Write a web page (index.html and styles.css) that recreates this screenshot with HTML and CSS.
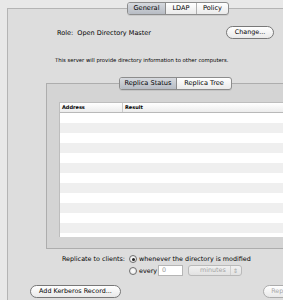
FILE: index.html
```html
<!DOCTYPE html>
<html lang="en">
<head>
  <meta charset="UTF-8" />
  <title>Open Directory</title>
  <link rel="stylesheet" href="styles.css">
</head>
<body>

<div class="pane">
  <div class="tabs top-tabs">
    <span class="tab on w-general">General</span><span class="tab w-ldap">LDAP</span><span class="tab w-policy">Policy</span>
  </div>

  <div class="role-row">
    <span>Role:&nbsp; Open Directory Master</span>
    <button class="btn change">Change...</button>
  </div>

  <p class="desc">This server will provide directory information to other computers.</p>

  <div class="subpane">
    <div class="tabs sub-tabs">
      <span class="tab on w-status">Replica Status</span><span class="tab w-tree">Replica Tree</span>
    </div>

    <div class="table">
      <div class="thead">
        <span class="col-addr">Address</span><span class="col-res">Result</span>
      </div>
      <div class="row"></div>
      <div class="row"></div>
      <div class="row"></div>
      <div class="row"></div>
      <div class="row"></div>
      <div class="row"></div>
      <div class="row"></div>
      <div class="row"></div>
      <div class="row"></div>
      <div class="row"></div>
      <div class="row"></div>
      <div class="row"></div>
      <div class="row"></div>
    </div>
  </div>

  <div class="replicate">
    <div class="rep-row">
      <span class="rep-label">Replicate to clients:</span>
      <span class="radio on"></span>
      <span>whenever the directory is modified</span>
    </div>
    <div class="rep-row second">
      <span class="rep-label"></span>
      <span class="radio"></span>
      <span class="every">every</span>
      <span class="num">0</span>
      <span class="select">minutes<span class="arrows">&#8661;</span></span>
    </div>
  </div>

  <div class="bottom-row">
    <button class="btn kerberos">Add Kerberos Record...</button>
    <button class="btn repl" disabled>Replicate...</button>
  </div>
</div>

</body>
</html>
```

FILE: styles.css
```css
html, body {
  margin: 0;
  padding: 0;
  overflow: hidden;
}
body {
  width: 283px;
  height: 300px;
  background: #e8e8e8;
  font-family: "DejaVu Sans", "Liberation Sans", sans-serif;
  font-size: 6.4px;
  color: #000;
  padding-top: 8px;
  box-sizing: border-box;
}
.pane {
  margin-left: 7px;
  width: 320px;
  height: 320px;
  background: #dddddd;
  border: 1px solid #b4b4b4;
  border-right: none;
}

/* segmented tabs */
.tabs {
  display: flex;
  width: max-content;
  height: 13px;
  box-sizing: border-box;
  border: 1px solid #8c8c8c;
  border-radius: 3px;
  overflow: hidden;
  background: linear-gradient(#ffffff, #eaeaea);
  box-shadow: 0 1px 0 rgba(0,0,0,0.08);
}
.tab {
  display: block;
  text-align: center;
  line-height: 11px;
  font-size: 6.6px;
  border-left: 1px solid #b0b0b0;
}
.tab:first-child {
  border-left: none;
}
.tab.on {
  background: linear-gradient(#d6d9de, #b7bcc4);
  border-left-color: #8c8c8c;
}
.tab.on + .tab {
  border-left-color: #8c8c8c;
}
.top-tabs {
  margin: -7px 0 0 119px;
}
.w-general { width: 37px; }
.w-ldap { width: 30px; }
.w-policy { width: 31px; }
.sub-tabs {
  margin: -7px 0 0 72px;
}
.w-status { width: 56px; }
.w-tree { width: 54px; }

/* buttons */
.btn {
  display: block;
  height: 13px;
  padding: 0;
  box-sizing: border-box;
  border: 1px solid #787878;
  border-radius: 7px;
  background: linear-gradient(#ffffff, #e9e9e9);
  font-family: inherit;
  font-size: 6.4px;
  color: #000;
  line-height: 11px;
  text-align: center;
}
.btn:disabled {
  color: #a8a8a8;
  border-color: #acacac;
}

.role-row {
  display: flex;
  align-items: center;
  justify-content: space-between;
  width: 266px;
  height: 13px;
  margin-top: 11px;
  padding-left: 49px;
  box-sizing: border-box;
  font-size: 6.5px;
}
.change {
  width: 48px;
}

.desc {
  margin: 17px 0 0 47px;
  font-size: 5.3px;
  line-height: 8px;
}

.subpane {
  margin: 19px 0 0 38px;
  background: #d4d4d4;
  border: 1px solid #adadad;
  border-right: none;
  padding-bottom: 11px;
}
.table {
  margin: 12px 0 0 12px;
  height: 135px;
  overflow: hidden;
  background: #fff;
  border-left: 1px solid #bdbdbd;
  border-top: 1px solid #bdbdbd;
  box-sizing: border-box;
}
.thead {
  display: flex;
  height: 9px;
  border-bottom: 1px solid #b9b9b9;
  background: linear-gradient(#ffffff, #ececec);
  font-size: 5px;
  font-weight: bold;
  line-height: 8px;
}
.col-addr {
  width: 63px;
  padding-left: 2px;
  border-right: 1px solid #cacaca;
  box-sizing: border-box;
}
.col-res {
  padding-left: 2px;
}
.row {
  height: 10px;
}
.row:nth-child(odd) {
  background: #efefef;
}

.replicate {
  margin-top: 5px;
}
.rep-row {
  display: flex;
  align-items: center;
  height: 10px;
}
.rep-row.second {
  height: 11px;
  margin-top: 1px;
}
.rep-label {
  width: 117px;
  text-align: right;
  margin-right: 4px;
}
.radio {
  width: 8px;
  height: 8px;
  box-sizing: border-box;
  border: 1px solid #6f6f6f;
  border-radius: 50%;
  background: radial-gradient(#ffffff, #e2e2e2);
  margin-right: 2px;
  position: relative;
}
.radio.on::after {
  content: "";
  position: absolute;
  left: 1.5px;
  top: 1.5px;
  width: 3px;
  height: 3px;
  border-radius: 50%;
  background: #222;
}
.every {
  width: 19px;
}
.num {
  width: 25px;
  height: 11px;
  box-sizing: border-box;
  background: #fff;
  border: 1px solid #b5b5b5;
  color: #999;
  padding-left: 3px;
  line-height: 9px;
}
.select {
  display: flex;
  justify-content: space-between;
  width: 54px;
  height: 11px;
  margin-left: 5px;
  box-sizing: border-box;
  border: 1px solid #b9b9b9;
  border-radius: 3px;
  background: linear-gradient(#f1f1f1, #e2e2e2);
  color: #a4a4a4;
  padding: 0 3px 0 11px;
  line-height: 9px;
}
.arrows {
  font-size: 6px;
  border-left: 1px solid #cfcfcf;
  padding-left: 2px;
}

.bottom-row {
  display: flex;
  margin-top: 9px;
  padding-left: 22px;
}
.kerberos {
  width: 91px;
}
.repl {
  width: 52px;
  margin-left: 142px;
}
```
